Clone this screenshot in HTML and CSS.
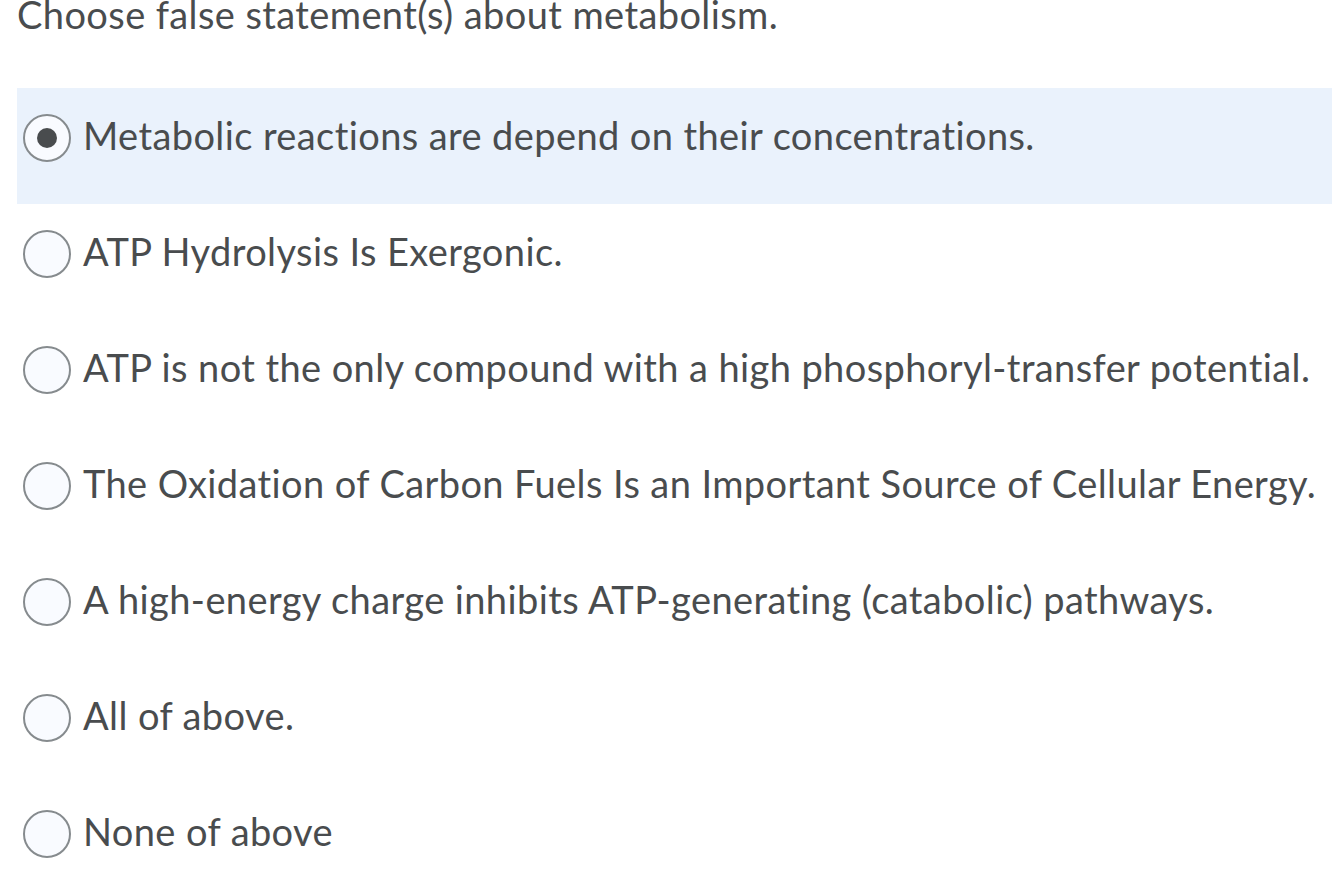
FILE: index.html
```html
<!DOCTYPE html>
<html>
<head>
<meta charset="utf-8">
<link rel="stylesheet" href="styles.css">
</head>
<body>
<div class="question">
  <div class="prompt">Choose false statement(s) about metabolism.</div>
  <div class="options">
    <label class="option selected"><span class="radio checked"></span><span class="text">Metabolic reactions are depend on their concentrations.</span></label>
    <label class="option"><span class="radio"></span><span class="text">ATP Hydrolysis Is Exergonic.</span></label>
    <label class="option"><span class="radio"></span><span class="text">ATP is not the only compound with a high phosphoryl-transfer potential.</span></label>
    <label class="option"><span class="radio"></span><span class="text">The Oxidation of Carbon Fuels Is an Important Source of Cellular Energy.</span></label>
    <label class="option"><span class="radio"></span><span class="text">A high-energy charge inhibits ATP-generating (catabolic) pathways.</span></label>
    <label class="option"><span class="radio"></span><span class="text">All of above.</span></label>
    <label class="option"><span class="radio"></span><span class="text">None of above</span></label>
  </div>
</div>
</body>
</html>
```
FILE: styles.css
```css
html, body {
  margin: 0;
  padding: 0;
  background: #ffffff;
  overflow: hidden;
}
body {
  font-family: Lato, "Noto Sans", sans-serif;
  color: #494c4e;
  font-variant-ligatures: none;
}
.question {
  padding-left: 17px;
}
.prompt {
  font-size: 38px;
  letter-spacing: 0.4px;
  line-height: 34px;
  margin-top: -3px;
  white-space: nowrap;
}
.options {
  margin-top: 57px;
  display: flex;
  flex-direction: column;
}
.option {
  display: flex;
  align-items: center;
  gap: 12px;
  height: 116px;
  box-sizing: border-box;
  padding: 26px 0 42px 6px;
  font-size: 38px;
  letter-spacing: 0.4px;
}
.option.selected {
  background: #eaf2fc;
}
.radio {
  flex: none;
  width: 48px;
  height: 48px;
  box-sizing: border-box;
  border: 2px solid #868b8e;
  border-radius: 50%;
  background: #f9fbff;
  display: flex;
  align-items: center;
  justify-content: center;
}
.radio.checked::after {
  content: "";
  width: 20px;
  height: 20px;
  border-radius: 50%;
  background: #494c4e;
}
.text {
  white-space: nowrap;
  margin-bottom: 6px;
}
```
